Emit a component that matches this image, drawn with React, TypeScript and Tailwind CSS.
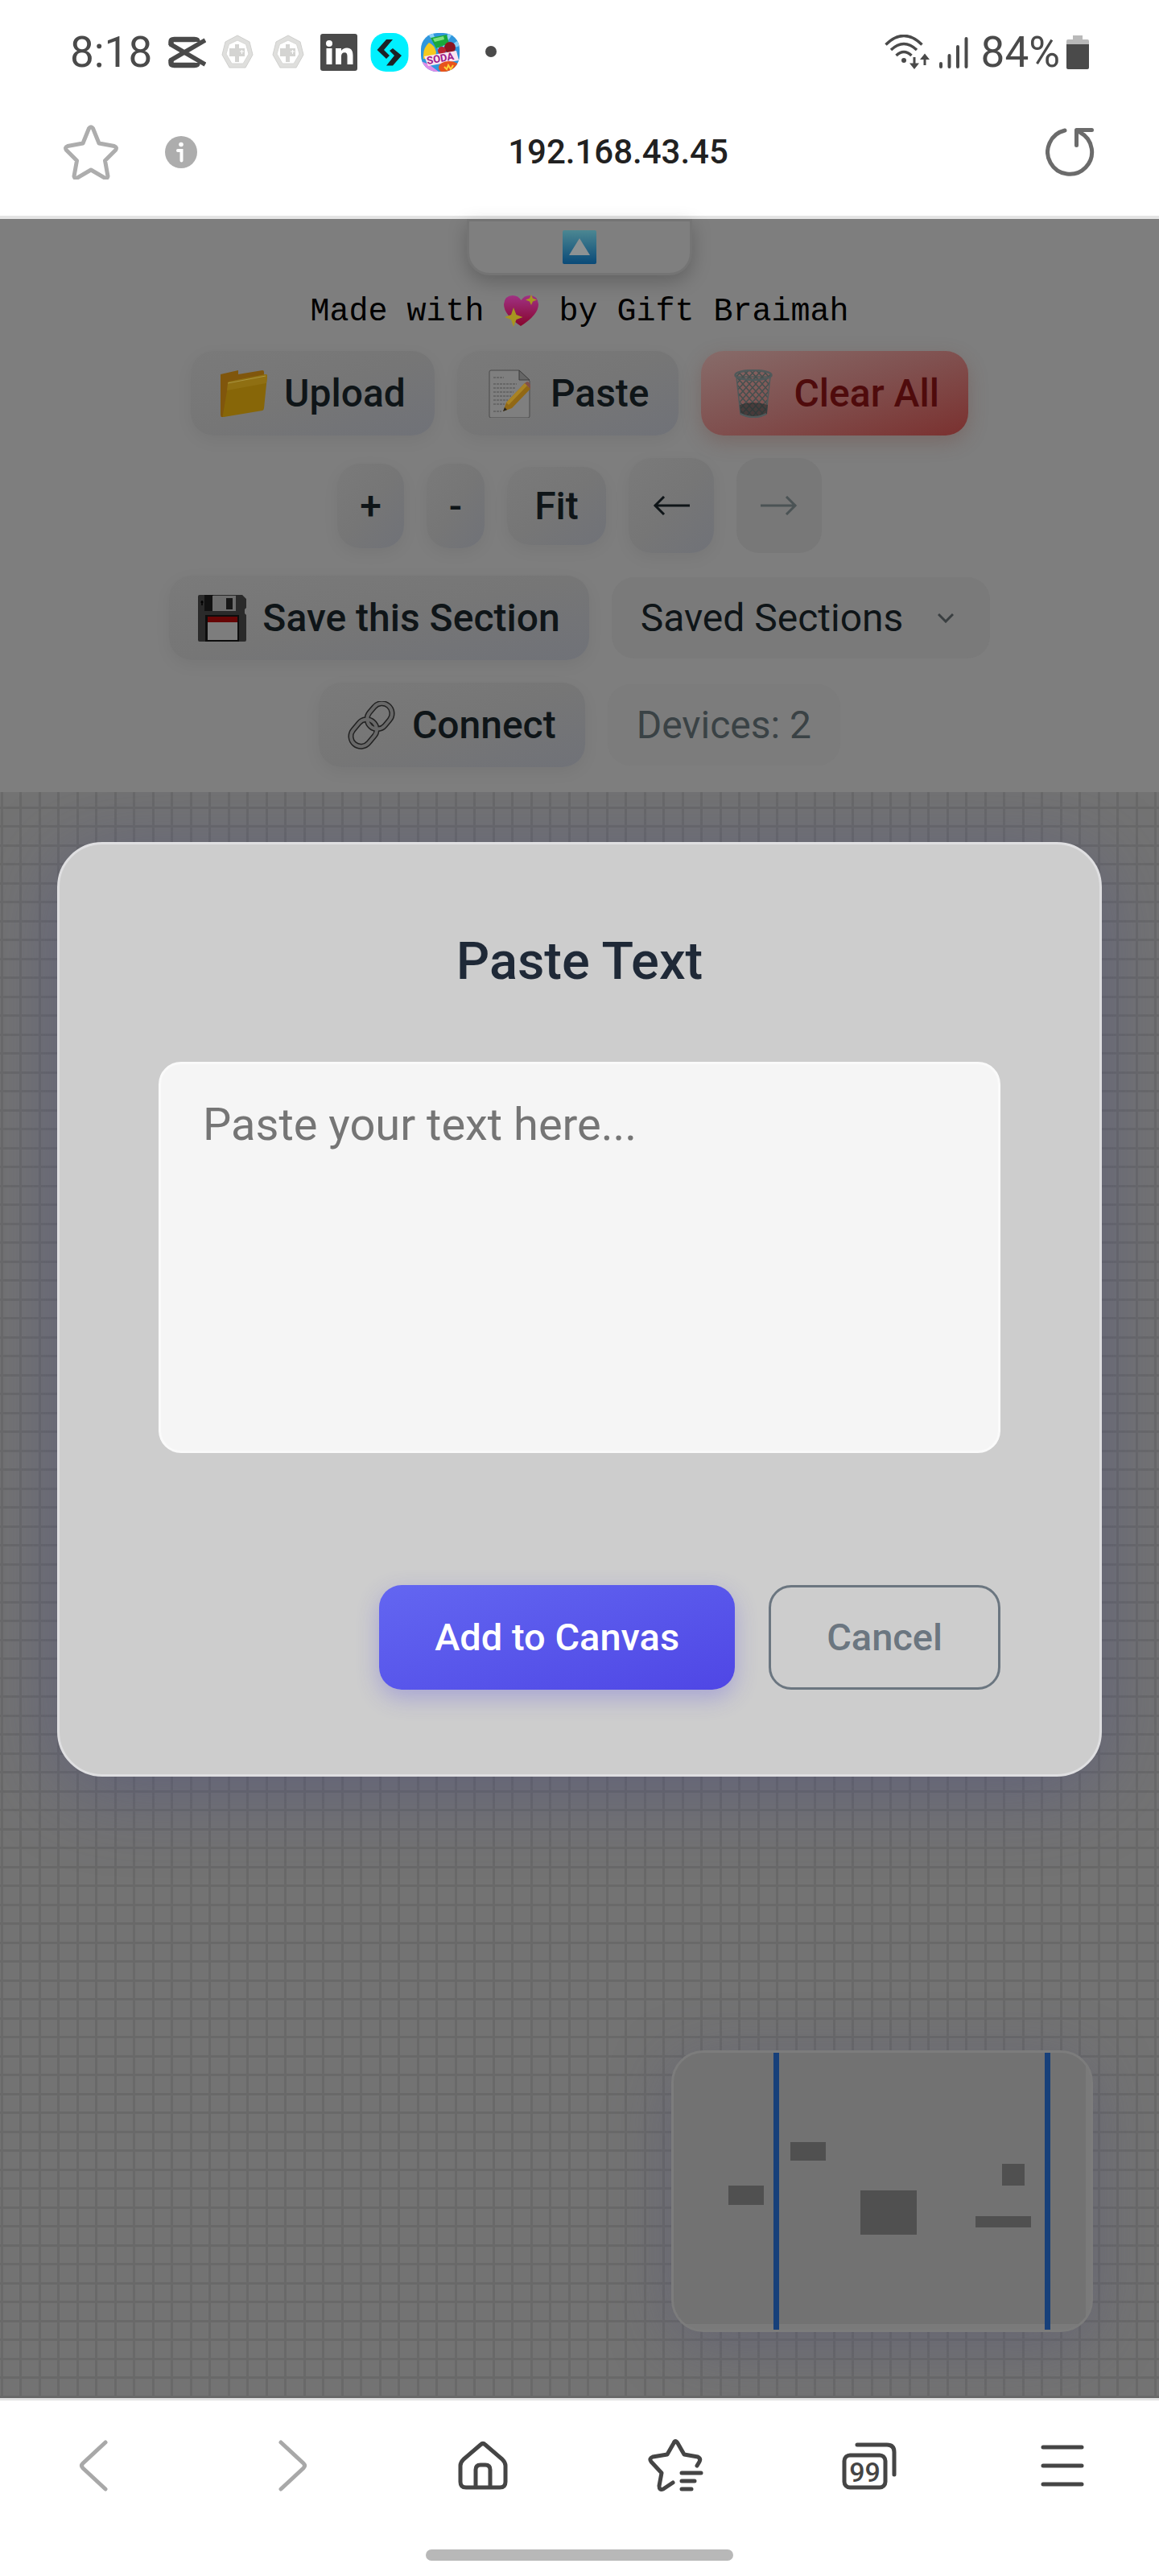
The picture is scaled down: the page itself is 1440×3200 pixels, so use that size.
import type { ReactNode } from "react";
import clsx from "clsx";

const LinkedInIcon = () => (
  <svg viewBox="0 0 48 48" className="size-12">
    <rect x="1" y="1" width="46" height="46" rx="3" fill="#4a4a4a" />
    <circle cx="12" cy="13" r="4" fill="#fff" />
    <path d="M8.500 19h7v20h-7zM20 19h7v3c1.500-2.300 4-3.600 7-3.600 5.500 0 7.500 3.600 7.500 9.600v11h-7V29c0-3-.8-4.700-3.300-4.700-2.800 0-4.200 1.900-4.200 4.700v10h-7z" fill="#fff" />
  </svg>
);

const CapCutIcon = () => (
  <svg viewBox="0 0 48 48" className="size-12" fill="none" stroke="#4a4a4a">
    <path d="M4.500 15V11q0-3 4-3h25q4 0 4 3M4.500 33v4q0 3 4 3h25q4 0 4-3" strokeWidth="6.500" />
    <path d="M3 13.500L47 39M3 34.500L47 9" strokeWidth="5.500" />
  </svg>
);

const MedalIcon = () => (
  <svg viewBox="0 0 48 48" className="size-12">
    <path d="M24 3l15 8 4 16-9 16H14L5 27 9 11z" fill="#dfdfdd" stroke="#cfcfcd" />
    <path d="M24 9l10.500 5 3.500 12-7 12H17l-7-12 3.500-12z" fill="#fff" stroke="#d8d8d6" />
    <path d="M21 14h5v5h7v10h-7v7h-5v-7h-7V19h7z" fill="#d4d4d2" />
    <path d="M27 23h5M29.500 21v5" stroke="#fff" />
  </svg>
);

const BybitIcon = () => (
  <svg viewBox="0 0 48 48" className="size-12">
    <rect x=".5" y="0" width="47" height="48" rx="19" fill="#00f0ff" />
    <path d="M20 8h8L17 21l7 7-4 4L8.500 21zM28 19l11 9-11 12.500h-8L30 28l-6-6z" fill="#1d2226" />
  </svg>
);

const SodaIcon = () => (
  <svg viewBox="0 0 48 48" className="size-12">
    <defs>
      <clipPath id="soda">
        <rect width="48" height="48" rx="20" />
      </clipPath>
    </defs>
    <g clipPath="url(#soda)">
      <rect width="48" height="48" fill="#2f97dd" />
      <path d="M24 24L8 0h7zM24 24L34 0h6zM24 24L48 8v8z" fill="#8bd2fa" />
      <path d="M3 28q0-10 7-16 7 3 9 12l-2 8H3z" fill="#f6c91e" />
      <path d="M12 6l20-4 3 11-16 6z" fill="#18a83b" />
      <path d="M15 7l13-3 1 4-12 3z" fill="#7fe07f" />
      <circle cx="36" cy="18" r="7" fill="#8b1420" />
      <circle cx="26" cy="22" r="5" fill="#b82230" />
      <path d="M0 35l10 4 12 9H4z" fill="#df8be8" />
      <path d="M4 29l40-7 3 12-38 7z" fill="#fbe4ef" />
      <ellipse cx="35" cy="43" rx="13" ry="8" fill="#e8541b" />
      <path d="M29 42l3 3 2-5 3 5 3-5" stroke="#ffd335" strokeWidth="2" fill="none" />
      <text x="8" y="39" transform="rotate(-10 8 39)" fontSize="13" fontWeight="700" fontFamily="Roboto, sans-serif" fill="#9c1d8c">
        SODA
      </text>
    </g>
  </svg>
);

const WifiIcon = () => (
  <svg viewBox="0 0 56 44" className="mr-1 h-11 w-14" fill="none" stroke="#4a4a4a">
    <path d="M1.500 12.500Q24 -9.500 46.500 12.500" strokeWidth="3.500" />
    <path d="M8 19Q24 4 40 19" strokeWidth="3.500" />
    <path d="M14.500 26Q24 17 33.500 26" strokeWidth="3.500" />
    <circle cx="24" cy="32" r="3" fill="#4a4a4a" stroke="none" />
    <path d="M37 28v11M50 38V27" strokeWidth="3" />
    <path d="M31 35.500h12l-6 7.500zM44 31h12l-6-7.500z" fill="#4a4a4a" stroke="none" />
  </svg>
);

const SignalIcon = () => (
  <svg viewBox="0 0 36 44" className="h-11 w-9" stroke="#4a4a4a" strokeWidth="4" strokeLinecap="round">
    <path d="M2 36v4M12.500 26v14M23 15v25M33.500 5v35" />
  </svg>
);

const BatteryIcon = () => (
  <svg viewBox="0 0 28 44" className="h-11 w-7">
    <path d="M8 1h12v5h6q2 0 2 2v6H0V8q0-2 2-2h6z" fill="#b9b9b9" />
    <path d="M0 12h28v29q0 2-2 2H2q-2 0-2-2z" fill="#4a4a4a" />
  </svg>
);

const StarIcon = () => (
  <svg viewBox="0 0 68 68" className="size-[68px]" fill="none" stroke="#adadad" strokeWidth="5" strokeLinejoin="round">
    <path d="M31.500 4.500q2.500-3.500 5 0l7.500 18.500 19 3.500q4 1.500 1.500 5L51.500 44.500l3.500 19.500q-.5 3.500-4 2L34 56 17 66q-3.500 1.500-4-2l3.500-19.500L3.500 31.500q-2.500-3.500 1.500-5L24 23z" />
  </svg>
);

const ReloadIcon = () => (
  <svg viewBox="0 0 62 62" className="size-[62px]" fill="none" stroke="#6b6b6b" strokeWidth="5" strokeLinecap="round" strokeLinejoin="round">
    <path d="M24 4A27.500 27.500 0 1 0 43 6.500" />
    <path d="M57.500 3.500H38.500V22.500" />
  </svg>
);

const FolderEmoji = () => (
  <svg viewBox="0 0 60 60" className="size-[60px]">
    <path d="M1 6l22-5v5l30-5q2 0 2 2v10L4 59H2q-1-1-1-3z" fill="#80560c" />
    <path d="M11 15l46-9q2 0 2 2l-4 40q0 2-2 3L5 59q-2 0-1-3z" fill="#876608" />
    <path d="M11 15l46-9q2 0 2 2l-1 9L9 26l1-9z" fill="#8f6f12" />
    <path d="M10 17L57 8" stroke="#aa9441" fill="none" />
  </svg>
);

const MemoEmoji = () => (
  <svg viewBox="0 0 60 60" className="size-[60px]">
    <path d="M6 1h35l13 13v44q0 2-2 2H6q-2 0-2-2V3q0-2 2-2z" fill="#7f7f7f" stroke="#4b4b4b" />
    <path d="M41 1v12h13z" fill="#666" stroke="#3d3d3d" />
    <path d="M9 10h13M9 18h29M9 23h27M9 28h25M9 33h22M9 38h18M9 43h14M9 52h10" stroke="#606060" strokeWidth="1.500" strokeDasharray="3 1" />
    <path d="M21 52l4-11 23-24 7 7-23 24z" fill="#916815" />
    <path d="M25 41l23-24 3 3-23 24z" fill="#a98324" />
    <path d="M48 17l3-2q4 1 4 6v3z" fill="#825048" />
    <path d="M21 52l2-5 3 3z" fill="#222" />
  </svg>
);

const TrashEmoji = () => (
  <svg viewBox="0 0 60 60" className="size-[60px]" fill="none" stroke="#50595a">
    <defs>
      <pattern id="mesh" width="8" height="9" patternUnits="userSpaceOnUse">
        <path d="M0 0l8 9M8 0L0 9" stroke="#464f4e" strokeWidth="1.500" />
      </pattern>
    </defs>
    <path d="M8 9l5 46q17 9 32 0l5-46z" fill="url(#mesh)" strokeWidth="1.500" />
    <path d="M12 44q16-6 35 0l-1 11q-16 8-33 0z" fill="#232b2c" fillOpacity=".6" stroke="none" />
    <ellipse cx="29" cy="7" rx="22.500" ry="6" strokeWidth="2.500" fill="url(#mesh)" />
    <path d="M13 55q17 8 32 0" strokeWidth="2" />
  </svg>
);

const FloppyEmoji = () => (
  <svg viewBox="0 0 60 60" className="size-[60px]">
    <path d="M2 1h53l5 5v11l-2 2v5l2 2v31q0 2-2 2H2q-2 0-2-2V3q0-2 2-2z" fill="#2a2a2a" />
    <path d="M8 1h11v20H8z" fill="#111" />
    <path d="M18 2h29v19H18z" fill="#6d6d6d" />
    <path d="M35 5h8v14h-8z" fill="#171717" />
    <path d="M9 26h42v33H9z" fill="#0d0d0d" />
    <path d="M12 28h37v7H12z" fill="#660505" />
    <path d="M12 35h37v22H12z" fill="#7d7d7d" />
    <path d="M5 8v6M3.500 10h3" stroke="#000" strokeWidth="1.500" />
  </svg>
);

const LinkEmoji = () => (
  <svg viewBox="0 0 60 60" className="size-[60px]" fill="none">
    <g stroke="#222" strokeWidth="7">
      <rect x="23" y="6" width="34" height="25" rx="12.500" transform="rotate(-50 40 19)" />
      <rect x="2" y="27" width="36" height="25" rx="12.500" transform="rotate(-50 20 39.500)" />
    </g>
    <g stroke="#686868" strokeWidth="4">
      <rect x="23" y="6" width="34" height="25" rx="12.500" transform="rotate(-50 40 19)" />
      <rect x="2" y="27" width="36" height="25" rx="12.500" transform="rotate(-50 20 39.500)" />
    </g>
  </svg>
);

const HeartEmoji = () => (
  <svg viewBox="0 0 45 40" className="inline-block h-10 w-[45px] align-[-8px]">
    <defs>
      <linearGradient id="heart" x1="0" y1="0" x2="0" y2="1">
        <stop offset="0" stopColor="#a03183" />
        <stop offset="1" stopColor="#87052d" />
      </linearGradient>
    </defs>
    <path d="M22 39Q1 25 1 12 2 1 12 1q7 0 10.500 6Q26 1 33 1q10 0 11 11 0 13-22 27z" fill="url(#heart)" />
    <path d="M13 16l3.500 9 8 3-8 3L13 40l-3-9-8-3 8-3zM35 0l2 4.500 5 2-5 2L35 13l-2-4.500-5-2 5-2z" fill="#a79520" />
  </svg>
);

const UpEmoji = () => (
  <svg viewBox="0 0 42 42" className="size-[42px]">
    <defs>
      <linearGradient id="up" x1="0" y1="0" x2="0" y2="1">
        <stop offset="0" stopColor="#4c8792" />
        <stop offset="1" stopColor="#0a4a78" />
      </linearGradient>
    </defs>
    <rect width="42" height="42" rx="2" fill="url(#up)" />
    <path d="M21 10l13 21H8z" fill="#8d9293" />
  </svg>
);

const ArrowIcon = ({ className }: { className?: string }) => (
  <svg viewBox="0 0 46 24" className={clsx("h-6 w-[46px]", className)} fill="none" stroke="currentColor" strokeWidth="3">
    <path d="M46 12H2M14 1L3 12l11 11" />
  </svg>
);

type ToolButtonProps = {
  children: ReactNode;
  label?: string;
  className?: string;
  disabled?: boolean;
};

const ToolButton = ({ children, label, className, disabled }: ToolButtonProps) => (
  <button
    type="button"
    aria-label={label}
    disabled={disabled}
    className={clsx(
      "flex items-center justify-center gap-5 rounded-[28px] font-medium",
      disabled ? "bg-[#787878] text-[#4b5355]" : "shadow-[0_6px_20px_rgba(0,0,0,0.06)]",
      className ?? "px-9 py-[22px]",
      !disabled && !className?.includes("from-") && "bg-linear-to-br from-[#7a7a7a] via-[#767676] to-[#707278] text-[#0f1518]"
    )}
  >
    {children}
  </button>
);

const StatusBar = () => (
  <div className="flex items-center justify-between px-[87px] pt-[35px] text-[53px] leading-[60px] text-[#4a4a4a]">
    <div className="flex items-center gap-[15px]">
      <span className="mr-1">8:18</span>
      <CapCutIcon />
      <MedalIcon />
      <MedalIcon />
      <LinkedInIcon />
      <BybitIcon />
      <SodaIcon />
      <svg viewBox="0 0 48 48" className="size-12">
        <circle cx="24" cy="23" r="7" fill="#4a4a4a" />
      </svg>
    </div>
    <div className="flex items-center gap-2">
      <WifiIcon />
      <SignalIcon />
      <span className="ml-2">84%</span>
      <BatteryIcon />
    </div>
  </div>
);

const AddressBar = () => (
  <div className="flex items-center justify-between px-[79px] pt-[60px] pb-[45px]">
    <div className="flex flex-1 items-center gap-[58px]">
      <button type="button" aria-label="Bookmark">
        <StarIcon />
      </button>
      <button type="button" aria-label="Site information">
        <svg viewBox="0 0 40 40" className="size-10">
          <circle cx="20" cy="20" r="20" fill="#adadad" />
          <circle cx="20" cy="10.500" r="2.800" fill="#fff" />
          <path d="M16 18h4.500v12.500" stroke="#fff" strokeWidth="4" strokeLinecap="round" fill="none" />
        </svg>
      </button>
    </div>
    <span className="pl-24 text-[42px] leading-[50px] font-medium text-[#212121]">192.168.43.45</span>
    <div className="flex flex-1 justify-end">
      <button type="button" aria-label="Reload">
        <ReloadIcon />
      </button>
    </div>
  </div>
);

const Toolbar = () => (
  <div className="relative z-10 flex flex-col items-center bg-[#7e7e7e] pb-[31px] text-[48px] leading-[61px]">
    <button
      type="button"
      aria-label="Collapse toolbar"
      className="flex h-[70px] w-[280px] items-center justify-center rounded-b-[28px] border-[3px] border-[#747474] bg-[#7f7f7f] shadow-[0_8px_24px_rgba(0,0,0,0.22)]"
    >
      <UpEmoji />
    </button>
    <p className="mt-[22px] mb-6 font-['Liberation_Mono',monospace] text-[40px] leading-12 text-black">
      Made with <HeartEmoji /> by Gift Braimah
    </p>
    <div className="flex flex-col items-center gap-7">
      <div className="flex items-center gap-7">
        <ToolButton>
          <FolderEmoji />
          Upload
        </ToolButton>
        <ToolButton>
          <MemoEmoji />
          Paste
        </ToolButton>
        <ToolButton className="bg-linear-to-br from-[#876c6a] via-[#80504f] to-[#7a302f] px-9 py-[22px] text-[#4f0b0c] shadow-[0_8px_24px_rgba(110,60,50,0.3)]">
          <TrashEmoji />
          Clear All
        </ToolButton>
      </div>
      <div className="flex items-center gap-7">
        <ToolButton className="px-7 py-[22px]">+</ToolButton>
        <ToolButton className="px-7 py-[22px]">-</ToolButton>
        <ToolButton className="px-[34px] py-[18px]">Fit</ToolButton>
        <ToolButton label="Undo" className="h-[118px] px-[30px]">
          <ArrowIcon />
        </ToolButton>
        <ToolButton label="Redo" className="h-[118px] px-[30px]" disabled>
          <ArrowIcon className="rotate-180" />
        </ToolButton>
      </div>
      <div className="flex items-center gap-7">
        <ToolButton>
          <FloppyEmoji />
          Save this Section
        </ToolButton>
        <div className="relative">
          <select
            aria-label="Saved sections"
            className="w-[470px] appearance-none rounded-[28px] bg-[#7a7a7a] px-9 py-5 text-[#0f1518]"
          >
            <option>Saved Sections</option>
          </select>
          <svg viewBox="0 0 20 12" className="pointer-events-none absolute top-[45px] right-[45px] h-3 w-5" fill="none" stroke="#3a3f41" strokeWidth="3">
            <path d="M1 1l9 9 9-9" />
          </svg>
        </div>
      </div>
      <div className="flex items-center gap-7">
        <ToolButton>
          <LinkEmoji />
          Connect
        </ToolButton>
        <span className="rounded-[28px] bg-[#7c7c7c] px-9 py-5 text-[#3a4245]">Devices: 2</span>
      </div>
    </div>
  </div>
);

const Grid = () => (
  <svg className="absolute inset-0 size-full" aria-hidden="true">
    <defs>
      <pattern id="grid" width="47" height="47" patternUnits="userSpaceOnUse">
        <path d="M1 0h3v47H1zM24 0h3v47h-3zM0 18h47v3H0zM0 41h47v3H0z" fill="#696969" />
      </pattern>
    </defs>
    <rect width="100%" height="100%" fill="url(#grid)" />
  </svg>
);

const PasteModal = () => (
  <div
    role="dialog"
    aria-labelledby="paste-title"
    className="relative mx-[71px] mt-[62px] rounded-[56px] border-[3px] border-[#dfdfe1] bg-[#cdcdcd] px-[123px] pt-[107px] pb-[105px] shadow-[0_16px_100px_rgba(70,72,130,0.42)]"
  >
    <h2 id="paste-title" className="text-center text-[65px] leading-[76px] font-medium text-[#1f2937]">
      Paste Text
    </h2>
    <textarea
      aria-labelledby="paste-title"
      placeholder="Paste your text here..."
      className="mt-[87px] block h-[486px] w-full resize-none rounded-[28px] border-[3px] border-[#fafafa] bg-[#f5f5f5] px-[52px] py-[42px] text-[56px] leading-[66px] text-[#1f2937] placeholder:text-[#757575]"
    />
    <div className="mt-[164px] flex justify-end gap-[42px] text-[47px] leading-[60px] font-medium">
      <button
        type="button"
        className="rounded-[28px] bg-linear-to-br from-[#6366f1] to-[#4f46e5] px-[69px] py-[35px] text-white shadow-[0_10px_28px_rgba(79,70,229,0.3)]"
      >
        Add to Canvas
      </button>
      <button type="button" className="rounded-[28px] border-[3px] border-[#6b7680] px-[69px] py-8 text-[#6b7680]">
        Cancel
      </button>
    </div>
  </div>
);

const MiniMap = () => (
  <div className="absolute right-[82px] bottom-[82px] overflow-hidden rounded-[40px] border-[3px] border-[#7c7c7c] bg-[#7a7a7a] shadow-[0_16px_80px_rgba(80,80,115,0.4)]">
    <svg viewBox="0 0 518 344" className="block h-[344px] w-[518px]">
      <rect width="512" height="337" fill="#727272" />
      <g fill="#505050">
        <rect x="145" y="111" width="44" height="23" />
        <rect x="68" y="165" width="44" height="24" />
        <rect x="232" y="171" width="70" height="55" />
        <rect x="408" y="138" width="28" height="27" />
        <rect x="375" y="203" width="69" height="14" />
      </g>
      <path d="M124 0h7v344h-7zM461 0h7v344h-7z" fill="#17407a" />
    </svg>
  </div>
);

const NavButton = ({ label, color = "#454545", children }: { label: string; color?: string; children: ReactNode }) => (
  <button type="button" aria-label={label} className="flex justify-center">
    <svg viewBox="0 0 80 80" className="size-20" fill="none" stroke={color} strokeWidth="5" strokeLinecap="round" strokeLinejoin="round">
      {children}
    </svg>
  </button>
);

const BottomNav = () => (
  <nav className="border-t-[3px] border-[#e4e4e4] bg-white pt-[41px] pb-[19px]">
    <div className="grid grid-cols-6">
      <NavButton label="Back" color="#a8a8a8">
        <path d="M51 11L23 37q-3 3 0 6l28 26" />
      </NavButton>
      <NavButton label="Forward" color="#a8a8a8">
        <path d="M29 11l28 26q3 3 0 6L29 69" />
      </NavButton>
      <NavButton label="Home">
        <path d="M37 14q3-3 6 0l21 18q4 4 4 8v20q0 7-7 7H19q-7 0-7-7V40q0-4 4-8z" />
        <path d="M31 66V45q0-6 6-6h6q6 0 6 6v21" />
      </NavButton>
      <NavButton label="Bookmarks">
        <path d="M66 40l3-5q2-4-2-6L50 26 42 12q-3-5-5 0l-8 14-18 3q-5 2-2 6l13 14-3 16q0 6 5 4l12-8" />
        <path d="M47 49h24M47 59h16M47 69h12" />
      </NavButton>
      <NavButton label="Tabs">
        <rect x="9" y="27" width="51" height="40" rx="7" />
        <path d="M25 14h37q9 0 9 9v28" />
        <text x="34.500" y="60" textAnchor="middle" fontSize="34" fontWeight="500" fontFamily="Roboto, sans-serif" fill="#454545" stroke="none">
          99
        </text>
      </NavButton>
      <NavButton label="Menu">
        <path d="M16 17h48M16 40h48M16 63h48" />
      </NavButton>
    </div>
    <div className="mx-auto mt-16 h-[14px] w-[382px] rounded-full bg-[#b8b8b8]" />
  </nav>
);

export default function App() {
  return (
    <div className="flex min-h-screen flex-col bg-white font-[Roboto,sans-serif]">
      <header className="border-b-4 border-[#e4e4e4]">
        <StatusBar />
        <AddressBar />
      </header>
      <Toolbar />
      <main className="relative flex-1 overflow-hidden bg-[#737373]">
        <Grid />
        <PasteModal />
        <MiniMap />
      </main>
      <BottomNav />
    </div>
  );
}
